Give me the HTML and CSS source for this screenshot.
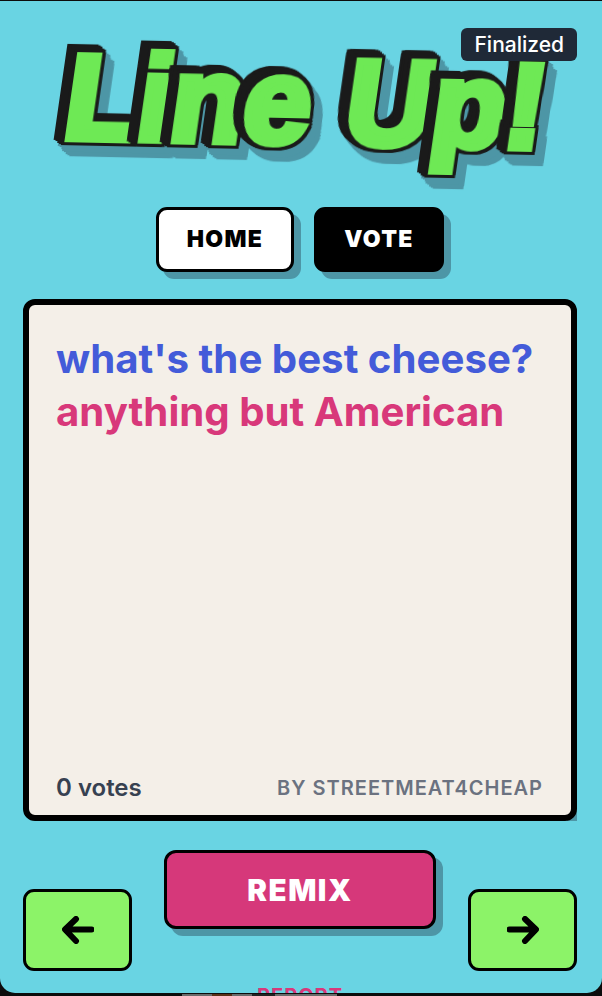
FILE: index.html
```html
<!DOCTYPE html>
<html lang="en">
<head>
    <meta charset="UTF-8">
    <title>Line Up!</title>
    <link rel="stylesheet" href="styles.css">
</head>
<body>

<div class="app">
    <header class="top">
        <!-- one span per letter so each letter gets its own dark seam -->
        <h1 class="logo"><span>L</span><span>i</span><span>n</span><span>e</span> <span>U</span><span>p</span><span>!</span></h1>
        <span class="badge">Finalized</span>
    </header>

    <nav class="tabs">
        <a class="tab">HOME</a>
        <a class="tab tab-dark">VOTE</a>
    </nav>

    <section class="card">
        <div class="lines">
            <p class="question">what's the best cheese?</p>
            <p class="answer">anything but American</p>
        </div>
        <div class="meta">
            <span class="votes">0 votes</span>
            <span class="author">BY STREETMEAT4CHEAP</span>
        </div>
    </section>

    <div class="actions">
        <button class="arrow">
            <svg width="32" height="28" viewBox="0 0 32 28"><path d="M29.500 13.500H5M14 3L3 13.500L14 25"/></svg>
        </button>
        <button class="remix">REMIX</button>
        <button class="arrow">
            <svg width="32" height="28" viewBox="0 0 32 28"><path d="M2.500 13.500H27M18 3L29 13.500L18 25"/></svg>
        </button>
    </div>

    <a class="report">REPORT</a>
</div>
<div class="strip"></div>

</body>
</html>
```

FILE: styles.css
```css
* {
    box-sizing: border-box;
}
html, body {
    height: 996px;
    overflow: hidden;
}
body {
    margin: 0;
    background-color: #0c0c0c;
    font-family: Inter, "Liberation Sans", sans-serif;
}
p {
    margin: 0;
}

.app {
    isolation: isolate;
    height: 992px;
    margin-top: 1px;
    padding: 0 25px 0 23px;
    overflow: hidden;
    background-color: #69d4e3;
    border-radius: 0 0 15px 15px;
}
/* bit of the page behind the sheet, only a few px show */
.strip {
    width: 155px;
    height: 2px;
    margin: 1px 0 0 182px;
    background: linear-gradient(to right, #6a6a6a 0 30px, #5a3018 30px 50px, #6a6a6a 50px 70px, #222 70px 93px, #6a6a6a 93px);
}

.top {
    position: relative;
    height: 206px;
    display: flex;
    justify-content: center;
}
.logo {
    margin: 34px 0 0 8px;
    font-family: "Liberation Sans", Arial, sans-serif;
    font-size: 120px;
    line-height: 132px;
    font-weight: 700;
    letter-spacing: -0.500px;
    word-spacing: 3px;
    white-space: nowrap;
    color: #6ee955;
    -webkit-text-stroke: 8px #6ee955;
    transform: rotate(1.200deg) skewX(-7deg);
    filter: drop-shadow(5px 6px 0 #4d96a6) drop-shadow(5px 5px 0 #4d96a6);
}
/* outline first, then the extrusion going up and left */
.logo span {
    display: inline-block;
    filter:
        drop-shadow(3px 0 0 #1a1a1a) drop-shadow(-3px 0 0 #1a1a1a)
        drop-shadow(0 3px 0 #1a1a1a) drop-shadow(0 -3px 0 #1a1a1a)
        drop-shadow(-4px -3px 0 #1a1a1a) drop-shadow(-2px -1px 0 #1a1a1a) drop-shadow(-2px -1px 0 #1a1a1a);
}
.badge {
    position: absolute;
    top: 27px;
    right: 0;
    padding: 4px 13px;
    border-radius: 6px;
    background-color: #1f2937;
    color: white;
    font-size: 21px;
    line-height: 25px;
    font-weight: 500;
}

.tabs {
    display: flex;
    justify-content: center;
    gap: 20px;
    height: 92px;
}
.tab {
    width: 138px;
    height: 65px;
    border: 3px solid black;
    border-radius: 11px;
    background-color: white;
    box-shadow: 7px 7px 0 #4d96a6;
    font-size: 23px;
    line-height: 58px;
    font-weight: 900;
    letter-spacing: 1.300px;
    text-align: center;
}
.tab-dark {
    width: 130px;
    background-color: black;
    color: white;
}

.card {
    position: relative;
    display: flex;
    flex-direction: column;
    justify-content: space-between;
    width: 554px;
    height: 522px;
    padding: 27px 28px 13px 27px;
    border: 6px solid black;
    border-radius: 12px;
    background-color: #f4efe8;
}
.card::before {
    content: '';
    position: absolute;
    right: -6px;
    bottom: -6px;
    width: 10px;
    height: 10px;
    background-color: #4d96a6;
    z-index: -1;
}
.question, .answer {
    font-size: 40.200px;
    line-height: 53px;
    font-weight: 700;
}
.question {
    color: #435bd9;
}
.answer {
    color: #d8387a;
}
.meta {
    display: flex;
    justify-content: space-between;
    align-items: center;
}
.votes {
    font-size: 24px;
    font-weight: 600;
    color: #374151;
}
.author {
    font-size: 20px;
    font-weight: 600;
    letter-spacing: 1px;
    color: #6b7280;
}

.actions {
    display: flex;
    justify-content: space-between;
    align-items: flex-start;
    width: 554px;
    padding-top: 29px;
}
.arrow {
    width: 109px;
    height: 82px;
    margin-top: 39px;
    padding: 0;
    border: 3px solid black;
    border-radius: 11px;
    background-color: #8cf368;
}
.arrow svg {
    display: block;
    margin: 0 auto;
    fill: none;
    stroke: black;
    stroke-width: 6px;
    stroke-linecap: round;
    stroke-linejoin: round;
}
.remix {
    width: 272px;
    height: 79px;
    border: 3px solid black;
    border-radius: 12px;
    background-color: #d6387a;
    box-shadow: 7px 7px 0 #4d96a6;
    color: white;
    font-family: Inter, "Liberation Sans", sans-serif;
    font-size: 29.500px;
    font-weight: 900;
    letter-spacing: 1.500px;
}

.report {
    display: block;
    margin-top: 13px;
    text-align: center;
    color: #d8387a;
    font-size: 20px;
    font-weight: 700;
    letter-spacing: 1px;
}
```
